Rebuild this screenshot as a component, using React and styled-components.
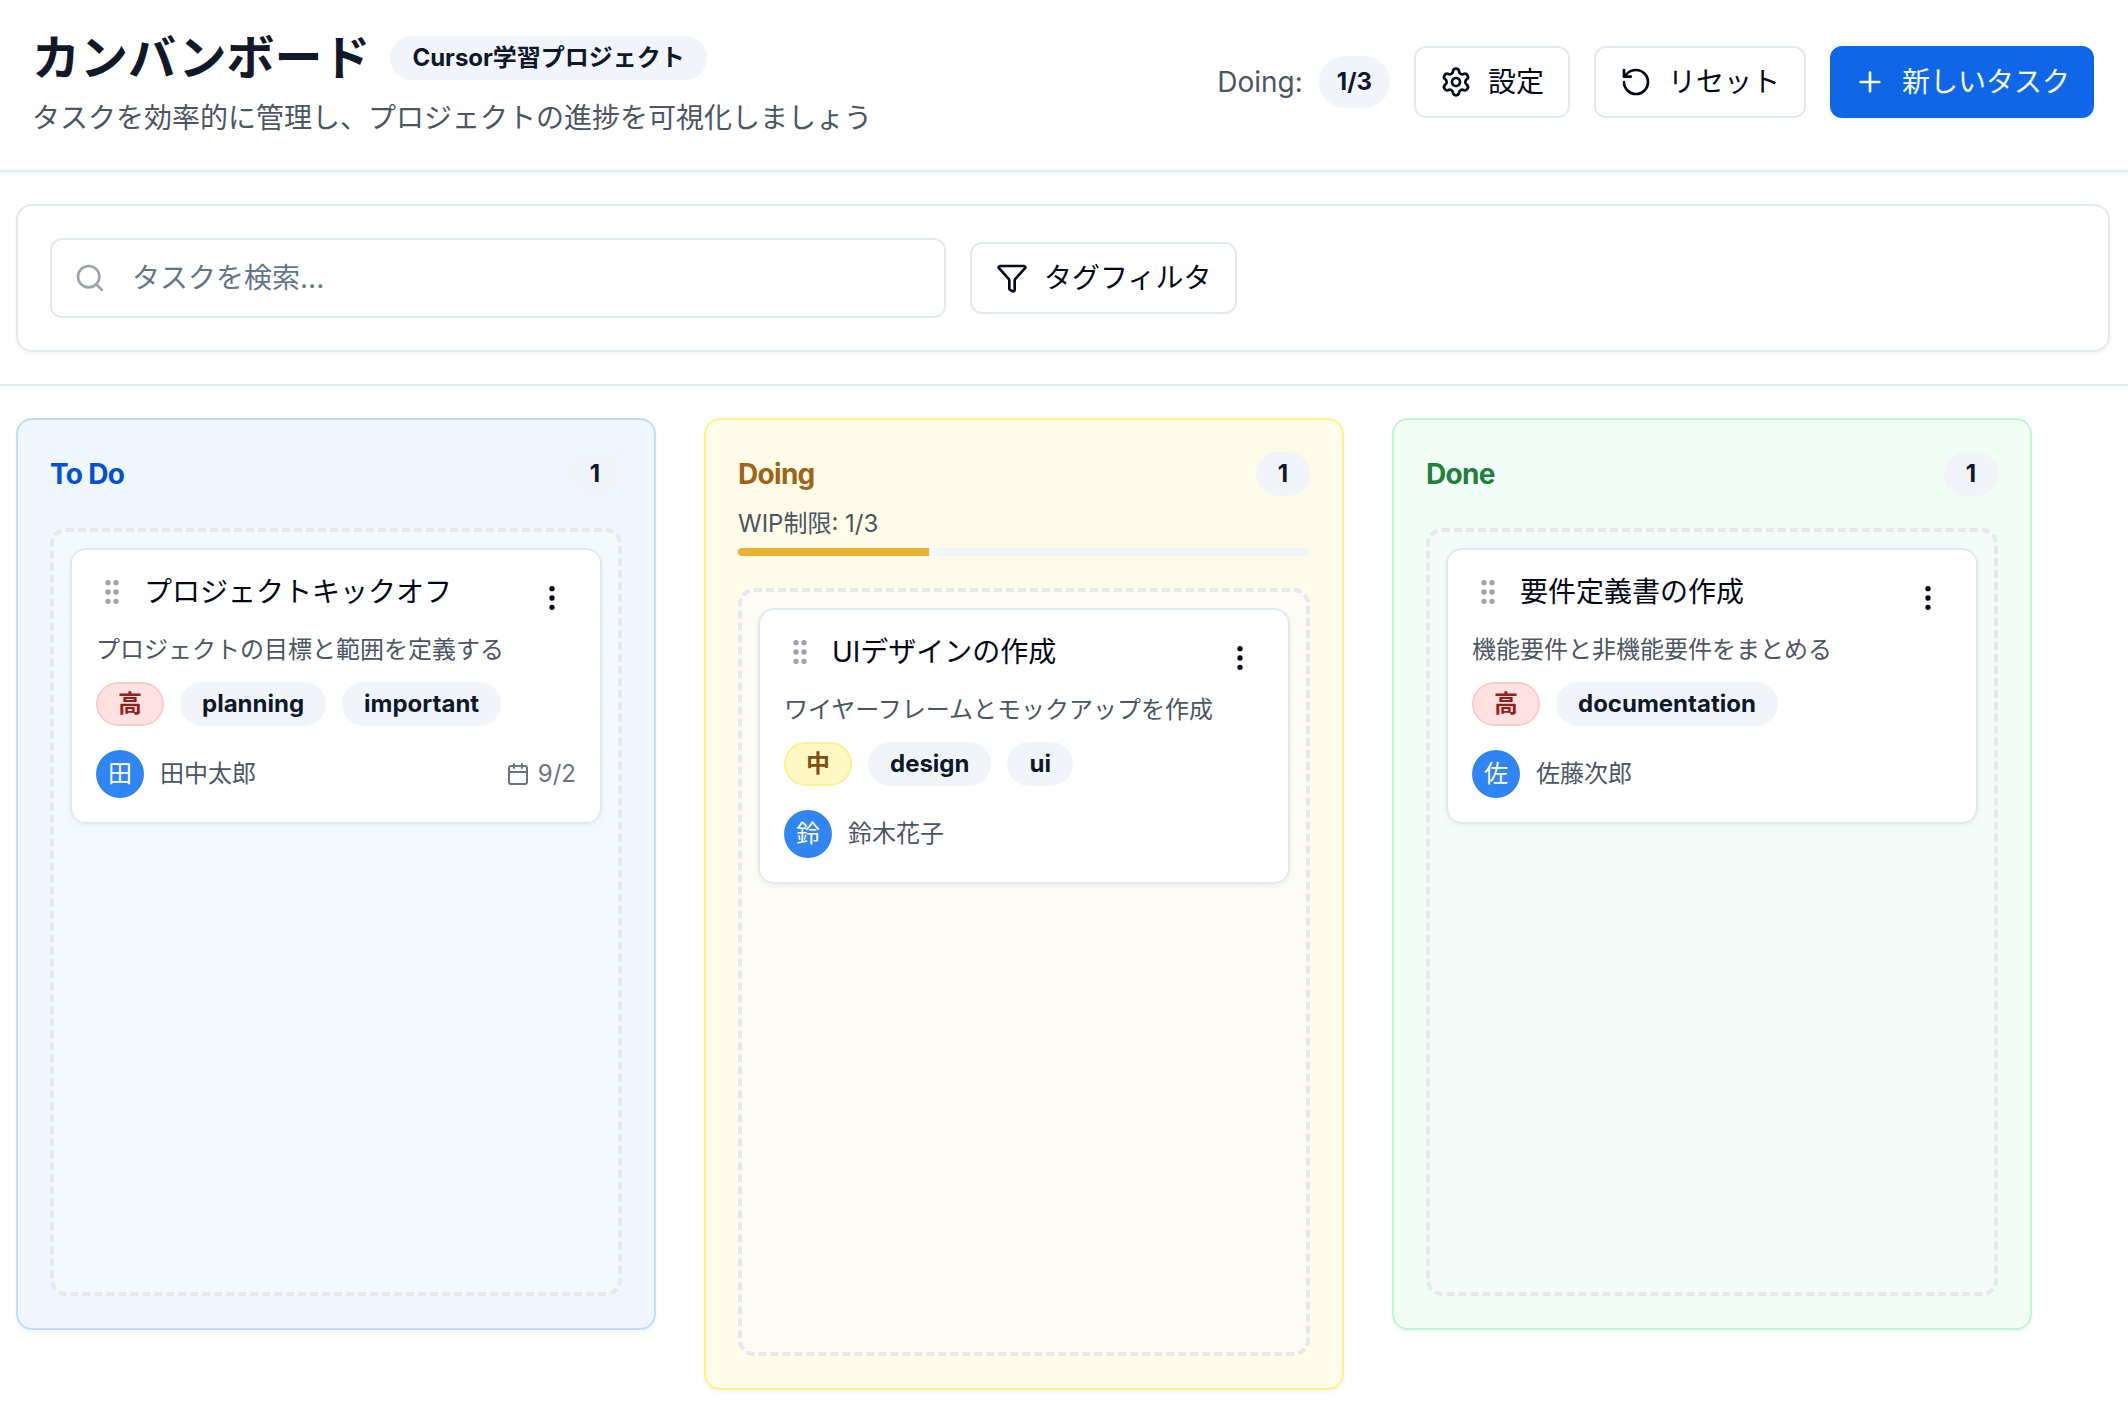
import React from "react";
import styled, { createGlobalStyle } from "styled-components";
import {
  Calendar,
  EllipsisVertical,
  Funnel,
  GripVertical,
  Plus,
  RotateCcw,
  Search,
  Settings,
} from "lucide-react";

const GlobalStyle = createGlobalStyle`
  *, *::before, *::after { box-sizing: border-box; }
  body {
    margin: 0;
    background: #ffffff;
    color: #020817;
    font-family: Inter, "Noto Sans CJK JP", sans-serif;
    font-size: 28px;
    line-height: 40px;
    -webkit-font-smoothing: antialiased;
  }
  h1, h2, h3, p, ul { margin: 0; padding: 0; }
  button, input { font: inherit; color: inherit; }
`;

const Header = styled.header`
  display: flex;
  align-items: center;
  justify-content: space-between;
  gap: 24px;
  padding: 26px 34px 32px 32px;
  border-bottom: 2px solid #e2e8f0;
  box-shadow: 0 2px 4px rgba(0, 0, 0, 0.05);
`;

const TitleRow = styled.div`
  display: flex;
  align-items: center;
  gap: 20px;
`;

const Title = styled.h1`
  font-size: 48px;
  line-height: 64px;
  font-weight: 700;
  color: #111827;
`;

const Subtitle = styled.p`
  margin-top: 8px;
  color: #4b5563;
`;

const Actions = styled.div`
  display: flex;
  align-items: center;
  gap: 24px;
`;

const WipStatus = styled.div`
  display: flex;
  align-items: center;
  gap: 16px;
  color: #4b5563;
`;

const tones = {
  neutral: { bg: "#f1f5f9", fg: "#0f172a", line: "#f1f5f9" },
  high: { bg: "#fee2e2", fg: "#991b1b", line: "#fecaca" },
  medium: { bg: "#fef9c3", fg: "#854d0e", line: "#fef08a" },
};

const Badge = styled.span`
  display: inline-flex;
  align-items: center;
  padding: ${(p) => (p.$roomy ? "8px 16px" : "4px 20px")};
  border: 2px solid ${(p) => tones[p.$tone || "neutral"].line};
  border-radius: 9999px;
  background: ${(p) => tones[p.$tone || "neutral"].bg};
  color: ${(p) => tones[p.$tone || "neutral"].fg};
  font-size: 24px;
  line-height: 32px;
  font-weight: 700;
  white-space: nowrap;
`;

const Button = styled.button`
  display: inline-flex;
  align-items: center;
  gap: 16px;
  height: 72px;
  padding: 0 24px;
  border: ${(p) => (p.$primary ? "0" : "2px solid #e2e8f0")};
  border-radius: 12px;
  background: ${(p) => (p.$primary ? "#0f67e8" : "#ffffff")};
  color: ${(p) => (p.$primary ? "#f8fafc" : "#020817")};
  white-space: nowrap;
  cursor: pointer;
`;

const FilterSection = styled.section`
  padding: 32px 18px 32px 16px;
  border-bottom: 2px solid #e2e8f0;
`;

const FilterPanel = styled.div`
  display: flex;
  align-items: center;
  gap: 24px;
  padding: 32px;
  border: 2px solid #e2e8f0;
  border-radius: 16px;
  box-shadow: 0 2px 4px rgba(0, 0, 0, 0.05);
`;

const SearchField = styled.label`
  display: flex;
  align-items: center;
  gap: 26px;
  flex: 0 1 896px;
  height: 80px;
  padding: 0 22px;
  border: 2px solid #e2e8f0;
  border-radius: 12px;
  color: #9ca3af;
`;

const SearchInput = styled.input`
  flex: 1;
  min-width: 0;
  padding: 0;
  border: 0;
  outline: 0;
  background: transparent;
  color: #020817;
  &::placeholder { color: #64748b; opacity: 1; }
`;

const Board = styled.main`
  display: flex;
  align-items: flex-start;
  gap: 48px;
  padding: 32px 16px;
`;

const Column = styled.section`
  flex: 0 0 640px;
  padding: 32px;
  border: 2px solid ${(p) => p.$theme.line};
  border-radius: 16px;
  background: ${(p) => p.$theme.bg};
  box-shadow: 0 2px 4px rgba(0, 0, 0, 0.05);
`;

const ColumnHeader = styled.div`
  display: flex;
  align-items: center;
  justify-content: space-between;
`;

const ColumnTitle = styled.h2`
  font-size: 28px;
  line-height: 40px;
  font-weight: 700;
  letter-spacing: -0.025em;
  color: ${(p) => p.$theme.fg};
`;

const WipLimit = styled.div`
  display: grid;
  gap: 8px;
  margin-top: 12px;
  color: #4b5563;
  font-size: 24px;
  line-height: 32px;
`;

const Track = styled.div`
  height: 8px;
  border-radius: 4px;
  background: #f1f5f9;
  overflow: hidden;
`;

const Fill = styled.div`
  height: 100%;
  background: #eab130;
`;

const DropZone = styled.ul`
  min-height: 768px;
  margin-top: 32px;
  padding: 16px;
  border: 4px dashed #e5e7eb;
  border-radius: 16px;
  background: ${(p) => p.$theme.zone};
  list-style: none;
`;

const Card = styled.li`
  padding: 24px;
  border: 2px solid #e2e8f0;
  border-radius: 16px;
  background: #ffffff;
  box-shadow: 0 2px 4px rgba(0, 0, 0, 0.05);
`;

const CardHeader = styled.div`
  display: flex;
  align-items: flex-start;
  justify-content: space-between;
`;

const CardHeading = styled.div`
  display: flex;
  align-items: center;
  gap: 16px;
  color: #9ca3af;
`;

const CardTitle = styled.h3`
  font-size: 28px;
  line-height: 36px;
  font-weight: 400;
  color: #020817;
`;

const MenuButton = styled.button`
  display: grid;
  place-items: center;
  width: 48px;
  height: 48px;
  padding: 0;
  border: 0;
  border-radius: 12px;
  background: transparent;
  cursor: pointer;
`;

const Description = styled.p`
  margin: 8px 0 12px;
  font-size: 24px;
  line-height: 40px;
  color: #4b5563;
`;

const Tags = styled.div`
  display: flex;
  flex-wrap: wrap;
  gap: 16px;
`;

const CardFooter = styled.div`
  display: flex;
  align-items: center;
  justify-content: space-between;
  margin-top: 24px;
  font-size: 24px;
  line-height: 32px;
`;

const Assignee = styled.div`
  display: flex;
  align-items: center;
  gap: 16px;
  color: #4b5563;
`;

const Avatar = styled.span`
  display: grid;
  place-items: center;
  width: 48px;
  height: 48px;
  border-radius: 50%;
  background: #3085f3;
  color: #ffffff;
`;

const DueDate = styled.time`
  display: flex;
  align-items: center;
  gap: 8px;
  color: #6b7280;
`;

const columns = [
  {
    name: "To Do",
    theme: { bg: "#eff6ff", line: "#bfdbfe", fg: "#0150d5", zone: "#f4f9fd" },
    task: {
      title: "プロジェクトキックオフ",
      description: "プロジェクトの目標と範囲を定義する",
      tone: "high",
      priority: "高",
      tags: ["planning", "important"],
      assignee: "田中太郎",
      due: "9/2",
    },
  },
  {
    name: "Doing",
    limit: 3,
    theme: { bg: "#fefce8", line: "#fef08a", fg: "#a16218", zone: "#fcfcf4" },
    task: {
      title: "UIデザインの作成",
      description: "ワイヤーフレームとモックアップを作成",
      tone: "medium",
      priority: "中",
      tags: ["design", "ui"],
      assignee: "鈴木花子",
    },
  },
  {
    name: "Done",
    theme: { bg: "#f2fdf5", line: "#bbf7d0", fg: "#1f8040", zone: "#f5fbf8" },
    task: {
      title: "要件定義書の作成",
      description: "機能要件と非機能要件をまとめる",
      tone: "high",
      priority: "高",
      tags: ["documentation"],
      assignee: "佐藤次郎",
    },
  },
];

function TaskCard({ task }) {
  return (
    <Card>
      <CardHeader>
        <CardHeading>
          <GripVertical size={32} />
          <CardTitle>{task.title}</CardTitle>
        </CardHeading>
        <MenuButton type="button" aria-label="メニュー">
          <EllipsisVertical size={32} />
        </MenuButton>
      </CardHeader>
      <Description>{task.description}</Description>
      <Tags>
        <Badge $tone={task.tone}>{task.priority}</Badge>
        {task.tags.map((tag) => (
          <Badge key={tag}>{tag}</Badge>
        ))}
      </Tags>
      <CardFooter>
        <Assignee>
          <Avatar>{task.assignee[0]}</Avatar>
          <span>{task.assignee}</span>
        </Assignee>
        {task.due && (
          <DueDate>
            <Calendar size={24} />
            {task.due}
          </DueDate>
        )}
      </CardFooter>
    </Card>
  );
}

function BoardColumn({ column }) {
  const { name, theme, task, limit } = column;
  return (
    <Column $theme={theme}>
      <ColumnHeader>
        <ColumnTitle $theme={theme}>{name}</ColumnTitle>
        <Badge>1</Badge>
      </ColumnHeader>
      {limit && (
        <WipLimit>
          <span>WIP制限: 1/{limit}</span>
          <Track>
            <Fill style={{ width: `${100 / limit}%` }} />
          </Track>
        </WipLimit>
      )}
      <DropZone $theme={theme}>
        <TaskCard task={task} />
      </DropZone>
    </Column>
  );
}

export default function App() {
  return (
    <>
      <GlobalStyle />
      <Header>
        <div>
          <TitleRow>
            <Title>カンバンボード</Title>
            <Badge>Cursor学習プロジェクト</Badge>
          </TitleRow>
          <Subtitle>タスクを効率的に管理し、プロジェクトの進捗を可視化しましょう</Subtitle>
        </div>
        <Actions>
          <WipStatus>
            <span>Doing:</span>
            <Badge $roomy>1/3</Badge>
          </WipStatus>
          <Button type="button">
            <Settings size={32} />
            設定
          </Button>
          <Button type="button">
            <RotateCcw size={32} />
            リセット
          </Button>
          <Button type="button" $primary>
            <Plus size={32} />
            新しいタスク
          </Button>
        </Actions>
      </Header>
      <FilterSection>
        <FilterPanel>
          <SearchField>
            <Search size={32} />
            <SearchInput type="text" aria-label="タスクを検索" placeholder="タスクを検索..." />
          </SearchField>
          <Button type="button">
            <Funnel size={32} />
            タグフィルタ
          </Button>
        </FilterPanel>
      </FilterSection>
      <Board>
        {columns.map((column) => (
          <BoardColumn key={column.name} column={column} />
        ))}
      </Board>
    </>
  );
}
